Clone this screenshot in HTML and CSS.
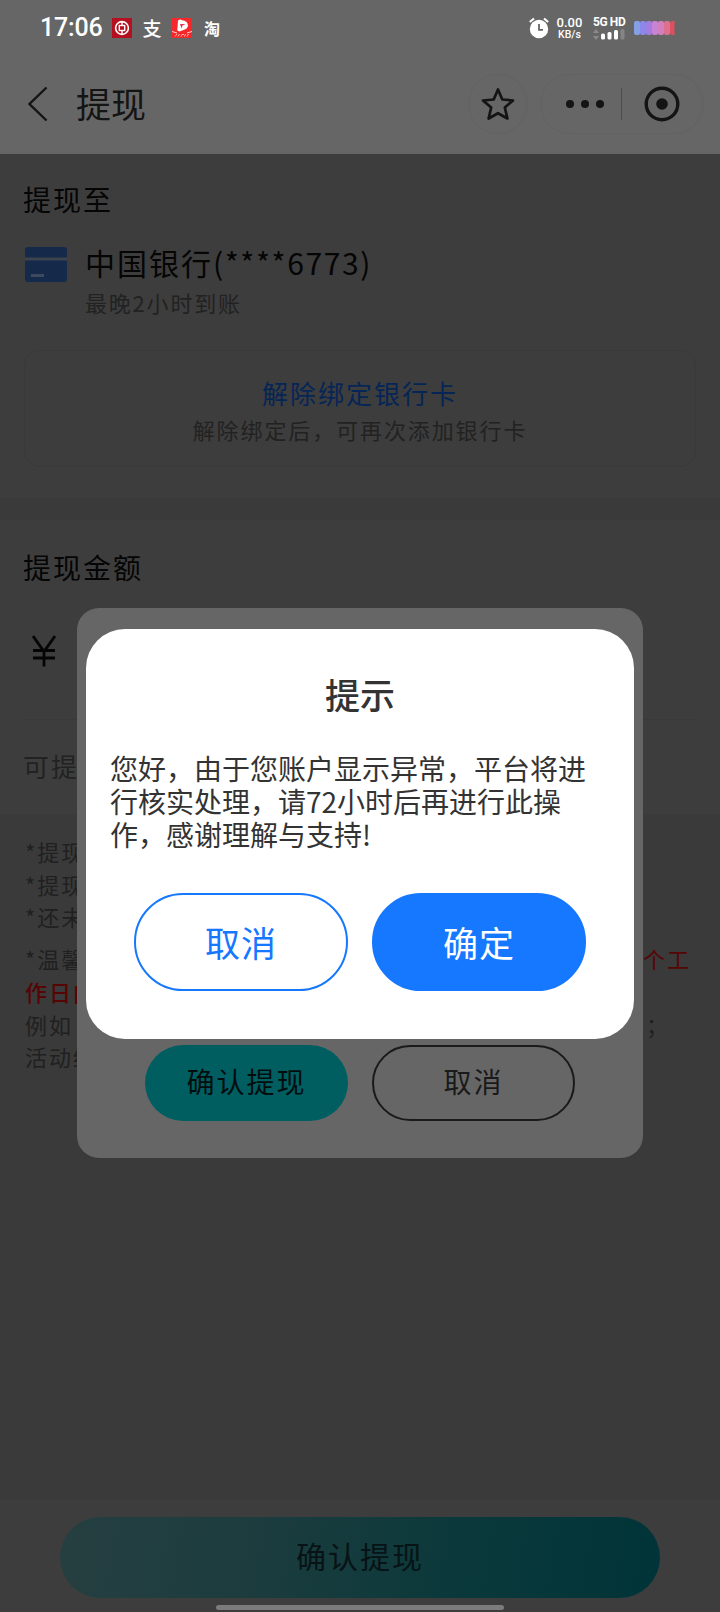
FILE: index.html
```html
<!DOCTYPE html>
<html lang="zh-CN">
<head>
<meta charset="utf-8">
<title>提现</title>
<link rel="stylesheet" href="styles.css">
</head>
<body>
<div class="screen">
  <header class="header">
    <div class="status">
      <span class="clock">17:06</span>
      <svg class="app-icon" width="20" height="20" viewBox="0 0 20 20"><rect width="20" height="20" fill="#b5101f"/><circle cx="10" cy="10" r="6.4" fill="none" stroke="#fff" stroke-width="1.6"/><path d="M10 3.5v4M10 12.500v4" stroke="#fff" stroke-width="1.4"/><rect x="7.300" y="7.500" width="5.400" height="5" fill="none" stroke="#fff" stroke-width="1.400"/></svg>
      <span class="glyph glyph-pay">支</span>
      <svg class="app-icon" width="20" height="20" viewBox="0 0 20 20"><rect width="20" height="20" fill="#f5272b"/><path d="M6 2.500Q8 .8 10 2.200Q15.500 2.500 16 7.500Q15.500 11 11.500 12L7.500 13.500Q4.500 13 5.500 10Z" fill="#fff"/><path d="M8 6h5.500l-3 1.500-1 3z" fill="#e6304e"/><path d="M0 13.500l5 1.500M20 13.500l-5 1.500" stroke="#fff" stroke-width=".8"/><path d="M3 18.500l2-2.500M6 18.500l1.500-2.500M9 18.500l1-2h2M12.500 18.500l1-2.500M15 18.500l1.500-2.500" stroke="#ffb9a5" stroke-width="1" fill="none"/></svg>
      <span class="glyph glyph-tao">淘</span>
      <span class="spacer"></span>
      <svg class="alarm" width="22" height="22" viewBox="0 0 22 22"><circle cx="11" cy="12" r="9.200" fill="#fff"/><path d="M1.800 5L6 1.500M20.200 5L16 1.500" stroke="#fff" stroke-width="2.200"/><path d="M11 7v5.800h4" fill="none" stroke="#666" stroke-width="1.800"/></svg>
      <div class="speed"><span class="speed-num">0.00</span><span class="speed-unit">KB/s</span></div>
      <div class="network">
        <span class="net-type">5G HD</span>
        <svg width="32" height="11" viewBox="0 0 32 11"><path d="M0 4l3-4 3 4zM0 7l3 4 3-4z" fill="#8a8a8a"/><rect x="8" y="4.500" width="4" height="6" rx="1.500" fill="#fff"/><rect x="14.500" y="3" width="4" height="7.500" rx="1.500" fill="#fff"/><rect x="21" y="1" width="4" height="9.500" rx="1.500" fill="#fff"/><rect x="27.500" y="0" width="4" height="10.500" rx="1.500" fill="#858585"/></svg>
      </div>
      <svg class="battery" width="42" height="16" viewBox="0 0 42 16"><g><rect x="0" y="1" width="6" height="14" rx="2" fill="#86a0e6"/><rect x="6" y="1" width="6" height="14" rx="2" fill="#8a88ea"/><rect x="12" y="1" width="6" height="14" rx="2" fill="#a17ee0"/><rect x="18" y="1" width="6" height="14" rx="2" fill="#c883d6"/><rect x="24" y="1" width="6" height="14" rx="2" fill="#d47fbd"/><rect x="30" y="1" width="6" height="14" rx="2" fill="#dc708e"/><path d="M38.500 1h2v14h-2q-2.500 0-2.500-3V4q0-3 2.500-3z" fill="#e04f5f"/></g></svg>
    </div>
    <div class="nav">
      <svg class="back" width="20" height="36" viewBox="0 0 20 36"><path d="M18.500 1.500L1.500 18l17 16.500" fill="none" stroke="#141414" stroke-width="2.400"/></svg>
      <h1 class="nav-title">提现</h1>
      <span class="spacer"></span>
      <div class="round-btn"><svg width="34" height="34" viewBox="0 0 34 34"><path d="M17 2.500l4.300 10 10.700 1-8.200 7 2.600 11L17 26.200 7.600 31.500l2.600-11L2 13.500l10.700-1z" fill="none" stroke="#141414" stroke-width="2.700" stroke-linejoin="round"/></svg></div>
      <div class="capsule">
        <svg width="40" height="10" viewBox="0 0 40 10"><circle cx="5" cy="5" r="4" fill="#141414"/><circle cx="20" cy="5" r="4" fill="#141414"/><circle cx="35" cy="5" r="4" fill="#141414"/></svg>
        <span class="capsule-line"></span>
        <svg width="36" height="36" viewBox="0 0 36 36"><circle cx="18" cy="18" r="15.800" fill="none" stroke="#141414" stroke-width="3.400"/><circle cx="18" cy="18" r="5.800" fill="#141414"/></svg>
      </div>
    </div>
  </header>

  <section class="panel account">
    <h2 class="label">提现至</h2>
    <div class="bank">
      <svg class="card-icon" width="42" height="35" viewBox="0 0 42 35"><rect width="42" height="35" rx="3" fill="#152a4b"/><rect y="10.500" width="42" height="3" fill="#3d434c"/><rect x="6" y="27" width="13" height="3" fill="#3d4a5d"/></svg>
      <div class="bank-text">
        <div class="bank-name">中国银行<span class="bank-no">(****6773)</span></div>
        <div class="bank-sub">最晚2小时到账</div>
      </div>
    </div>
    <div class="unbind">
      <div class="unbind-title">解除绑定银行卡</div>
      <div class="unbind-sub">解除绑定后，可再次添加银行卡</div>
    </div>
  </section>

  <section class="panel amount">
    <h2 class="label">提现金额</h2>
    <div class="money"><svg width="24" height="32" viewBox="0 0 24 32"><path d="M1 1l11 15.500L23 1M12 16v15.500M1 15.500h22M1 23h22" fill="none" stroke="#050505" stroke-width="2.800"/></svg></div>
    <div class="available">可提现</div>
  </section>

  <section class="notes">
    <p>*提现</p>
    <p>*提现</p>
    <p>*还未</p>
    <p class="tip"><span>*温馨</span><span class="red">个工</span></p>
    <p class="red strong">作日内</p>
    <p class="example"><span>例如</span><span>区；</span></p>
    <p>活动结</p>
  </section>

  <footer class="footer">
    <div class="submit">确认提现</div>
    <div class="home-bar"></div>
  </footer>

  <div class="sheet">
    <div class="sheet-btn sheet-ok">确认提现</div>
    <div class="sheet-btn sheet-cancel">取消</div>
  </div>

  <div class="dialog">
    <h3 class="dialog-title">提示</h3>
    <p class="dialog-text">您好，由于您账户显示异常，平台将进行核实处理，请72小时后再进行此操作，感谢理解与支持!</p>
    <div class="dialog-actions">
      <div class="btn btn-line">取消</div>
      <div class="btn btn-fill">确定</div>
    </div>
  </div>
</div>
</body>
</html>
```
FILE: styles.css
```css
* { box-sizing: border-box; margin: 0; padding: 0; }
body { background: #3a3a3a; }
.screen {
  position: relative;
  display: flex;
  flex-direction: column;
  width: 720px;
  height: 1612px;
  overflow: hidden;
  background: #3a3a3a;
  font-family: "Noto Sans CJK SC", sans-serif;
  font-weight: 400;
  white-space: nowrap;
}
h1, h2, h3 { font-weight: 400; }
svg { display: block; flex: none; }
.spacer { flex: 1; }

.header { height: 154px; flex: none; background: #666; }
.status {
  display: flex;
  align-items: center;
  height: 56px;
  padding: 0 44px 0 40px;
  color: #fff;
}
.clock { width: 72px; font: 500 25px/56px Roboto, sans-serif; letter-spacing: -0.2px; }
.glyph { font-weight: 500; line-height: 20px; text-align: center; }
.glyph-pay { width: 40px; font-size: 19px; }
.glyph-tao { width: 40px; font-size: 16px; font-weight: 700; }
.alarm { margin-right: 6px; }
.speed { display: flex; flex-direction: column; gap: 1px; width: 27px; margin-right: 10px; align-items: center; font-family: Roboto, sans-serif; font-weight: 500; }
.speed-num { font-size: 13px; line-height: 12px; }
.speed-unit { font-size: 10.500px; line-height: 10px; }
.network { display: flex; flex-direction: column; gap: 1px; width: 33px; margin-right: 8px; }
.net-type { font: 700 12px/11px Roboto, sans-serif; letter-spacing: -0.4px; }

.nav { display: flex; align-items: center; height: 96px; padding: 0 16px 0 28px; }
.back { margin-right: 28px; }
.nav-title { padding-bottom: 3px; color: #141414; font-size: 35px; line-height: 48px; }
.round-btn {
  display: flex;
  align-items: center;
  justify-content: center;
  width: 60px;
  height: 60px;
  margin-right: 12px;
  border: 1px solid #626262;
  border-radius: 30px;
}
.capsule {
  display: flex;
  align-items: center;
  justify-content: space-between;
  width: 164px;
  height: 60px;
  padding: 0 23px 0 24px;
  border: 1px solid #626262;
  border-radius: 30px;
}
.capsule-line { width: 1px; height: 32px; margin-right: 6px; background: #4e4e4e; }

.panel { flex: none; padding: 0 24px; background: #3d3d3d; }
.label { margin-left: -1px; color: #050505; font-size: 28px; line-height: 40px; letter-spacing: 2px; }
.account { height: 344px; padding-top: 25px; }
.bank { display: flex; height: 107px; margin-top: 24px; }
.card-icon { margin: 4px 18px 0 1px; }
.bank-text { display: flex; flex-direction: column; }
.bank-name { height: 41px; color: #050505; font-size: 30px; line-height: 38px; letter-spacing: 2px; }
.bank-no { letter-spacing: 1.600px; }
.bank-sub { color: #222; font-size: 22px; line-height: 36px; letter-spacing: 1.8px; }
.unbind {
  height: 117px;
  padding: 24px 0 0;
  border: 1px solid #393939;
  border-radius: 16px;
  text-align: center;
}
.unbind-title { color: #062557; font-size: 26px; line-height: 36px; letter-spacing: 2px; }
.unbind-sub { color: #222; font-size: 22px; line-height: 36px; letter-spacing: 1.900px; }
.amount { height: 294px; margin-top: 22px; padding-top: 27px; }
.money { height: 133px; padding: 48px 0 0 8px; border-bottom: 1px solid #393939; }
.available { margin: 26px 0 0 -1px; color: #222; font-size: 26px; line-height: 40px; letter-spacing: 2px; }

.notes {
  display: flex;
  flex-direction: column;
  flex: 1;
  padding: 21px 29px 0 25px;
  color: #202020;
  font-size: 22px;
  line-height: 32.700px;
  letter-spacing: 2px;
}
.tip { display: flex; justify-content: space-between; margin-top: 9px; }
.example { display: flex; justify-content: space-between; padding-right: 21px; }
.red { color: #560505; }
.strong { font-weight: 500; }

.footer { height: 112px; flex: none; padding: 17px 60px 0; background: #3d3d3d; }
.submit {
  height: 81px;
  border-radius: 41px;
  background: linear-gradient(100deg, #263f41, #1b3c3e 35%, #0b393b 65%, #003438);
  color: #071314;
  font-size: 30px;
  line-height: 77px;
  letter-spacing: 2px;
  text-align: center;
}
.home-bar { width: 288px; height: 5px; margin: 7px auto 0; border-radius: 3px; background: #7b7b7b; }

.sheet {
  position: absolute;
  left: 77px;
  top: 608px;
  display: flex;
  align-items: flex-end;
  justify-content: center;
  gap: 24px;
  width: 566px;
  height: 550px;
  padding-bottom: 37px;
  border-radius: 22px;
  background: #666;
}
.sheet-btn {
  width: 203px;
  height: 76px;
  border-radius: 38px;
  font-size: 28px;
  line-height: 72px;
  letter-spacing: 2px;
  text-align: center;
}
.sheet-ok { background: #005e61; color: #020d0e; }
.sheet-cancel { border: 2px solid #1a1a1a; color: #1a1a1a; line-height: 68px; }

.dialog {
  position: absolute;
  left: 86px;
  top: 629px;
  width: 548px;
  height: 410px;
  padding: 40px 24px 0;
  border-radius: 39px;
  background: #fff;
  color: #333;
}
.dialog-title { font-size: 35px; font-weight: 500; line-height: 50px; text-align: center; }
.dialog-text {
  height: 99px;
  margin-top: 33px;
  font-size: 28px;
  line-height: 33px;
  white-space: normal;
}
.dialog-actions { display: flex; justify-content: center; gap: 24px; margin-top: 42px; }
.btn {
  width: 214px;
  height: 98px;
  border: 2px solid #1677ff;
  border-radius: 49px;
  font-size: 35px;
  line-height: 93px;
  letter-spacing: 1px;
  text-align: center;
}
.btn-line { color: #1677ff; }
.btn-fill { background: #1677ff; color: #fff; }
```
